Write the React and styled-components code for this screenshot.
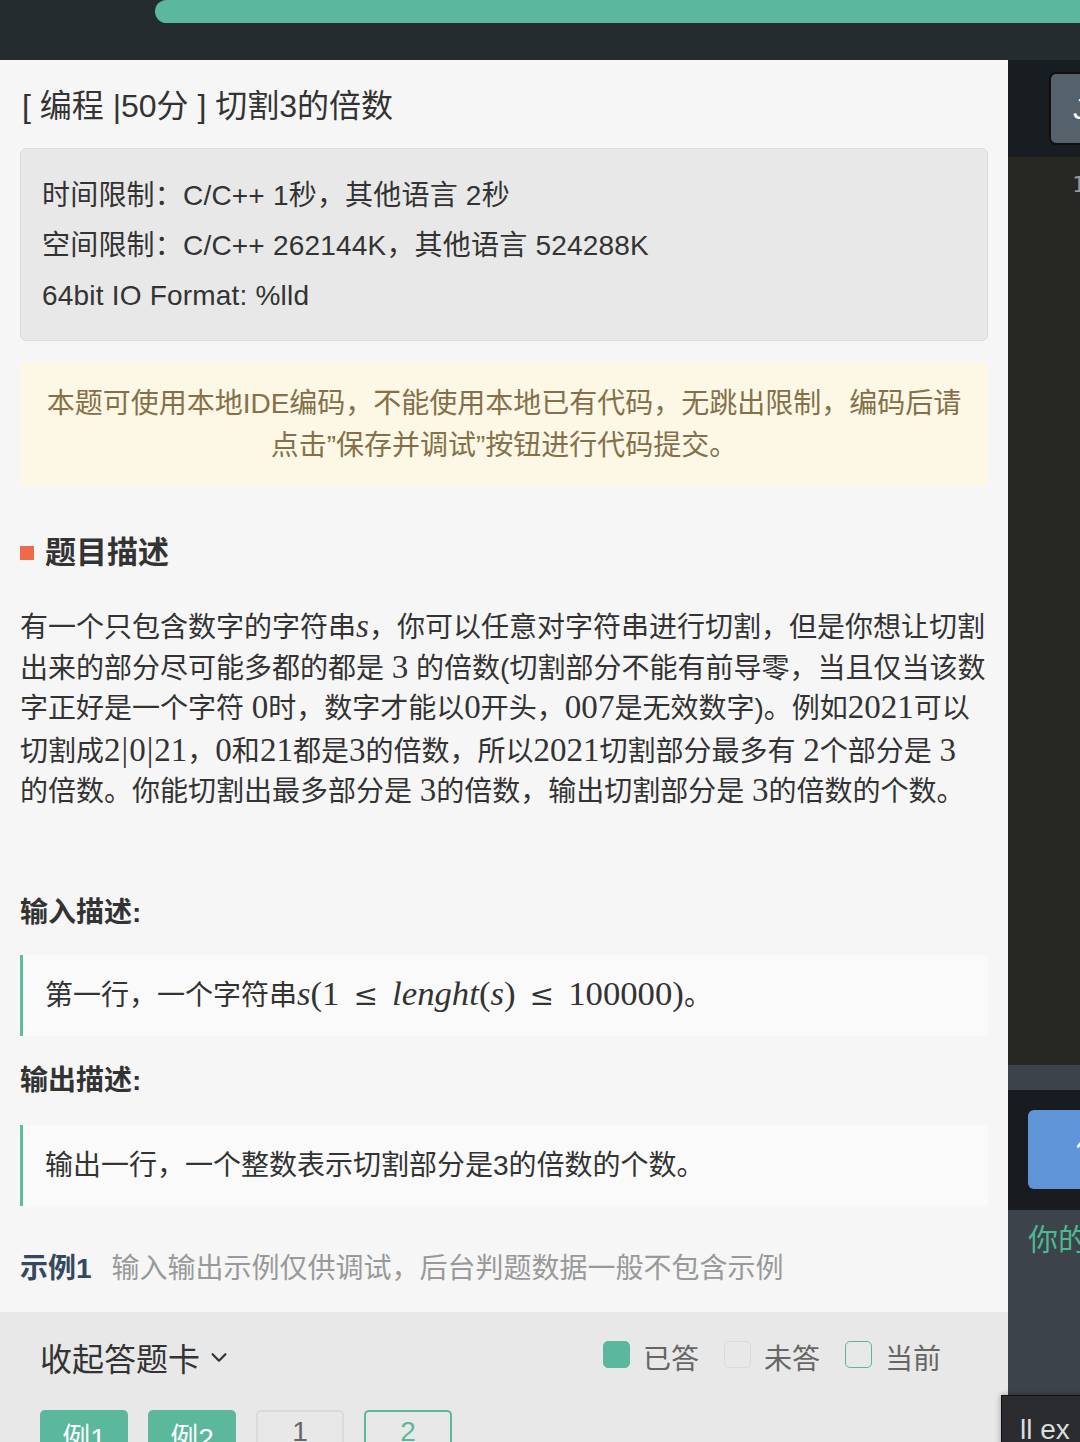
import React from 'react';
import styled, { createGlobalStyle } from 'styled-components';

const GlobalStyle = createGlobalStyle`
  html, body {
    margin: 0;
    padding: 0;
    background: #252c30;
  }
  body {
    font-family: "Liberation Sans", "Noto Sans CJK SC", sans-serif;
  }
  * {
    box-sizing: border-box;
  }
`;

const Page = styled.div`
  width: 1080px;
  height: 1442px;
  display: flex;
  flex-direction: column;
  overflow: hidden;
`;

const TopBar = styled.div`
  height: 60px;
  flex-shrink: 0;
  background-color: #252c30;
  padding-left: 155px;
`;

const Progress = styled.div`
  height: 23px;
  background-color: #5bb89c;
  border-radius: 12px 0 0 12px;
`;

const Main = styled.div`
  position: relative;
  flex: 1;
  display: flex;
  flex-direction: row;
  min-height: 0;
`;

const LeftPanel = styled.div`
  width: 1008px;
  flex-shrink: 0;
  display: flex;
  flex-direction: column;
  background-color: #f6f6f6;
`;

const Content = styled.div`
  flex: 1;
  overflow: hidden;
  padding: 0 20px;
  color: #333;
`;

const Title = styled.h1`
  margin: 24px 0 0 2px;
  font-size: 32px;
  font-weight: 400;
  line-height: 44px;
  color: #333;
`;

const InfoBox = styled.div`
  margin-top: 20px;
  padding: 22px 21px 19px;
  background-color: #e8e8e8;
  border: 1px solid #dcdcdc;
  border-radius: 6px;
`;

const InfoLine = styled.div`
  font-size: 28px;
  line-height: 50px;
  letter-spacing: 0.2px;
  white-space: nowrap;
`;

const Notice = styled.div`
  margin-top: 21px;
  padding: 21px 20px 19px;
  background-color: #fcf8e5;
  color: #85704a;
  font-size: 28px;
  line-height: 42px;
  text-align: center;
`;

const SectionHeading = styled.h2`
  display: flex;
  align-items: center;
  gap: 11px;
  margin: 45px 0 0;
  font-size: 31px;
  font-weight: 700;
  line-height: 44px;
  color: #333;

  &::before {
    content: '';
    width: 14px;
    height: 14px;
    background-color: #ee6a4a;
  }
`;

const Paragraph = styled.div`
  margin-top: 33px;
  font-size: 28px;
  line-height: 40.5px;
  color: #333;
`;

const Line = styled.div`
  white-space: nowrap;
`;

const Math = styled.span`
  font-family: "Liberation Serif", "DejaVu Serif", serif;
  font-size: ${(p) => (p.$big ? '1.24em' : '1.18em')};
  font-style: ${(p) => (p.$italic ? 'italic' : 'normal')};
  line-height: 1;
`;

const Rel = styled.span`
  font-family: "DejaVu Serif", "Liberation Serif", serif;
  font-size: 1.05em;
  margin: 0 14px;
  line-height: 1;
`;

const Bar = styled.span`
  font-family: "Liberation Serif", serif;
  font-size: 1.18em;
  margin: 0 1px;
`;

const SubHeading = styled.h3`
  margin: ${(p) => p.$top}px 0 0;
  font-size: 28px;
  font-weight: 700;
  line-height: 40px;
  color: #333;
`;

const Quote = styled.div`
  margin-top: ${(p) => p.$top}px;
  padding: 20px 22px;
  background-color: #fafafa;
  border-left: 3px solid #5bbd9c;
  font-size: 28px;
  line-height: 41px;
  white-space: nowrap;
`;

const Example = styled.div`
  margin-top: 43px;
  display: flex;
  align-items: center;
  gap: 20px;
  font-size: 28px;
  line-height: 40px;
`;

const ExampleTitle = styled.span`
  font-weight: 700;
  color: #34495e;
`;

const ExampleHint = styled.span`
  color: #999;
`;

const AnswerCard = styled.div`
  height: 130px;
  flex-shrink: 0;
  background-color: #e8e8e8;
  padding: 20px 67px 0 40px;
  overflow: hidden;
`;

const CardHeader = styled.div`
  display: flex;
  justify-content: space-between;
  align-items: center;
  height: 50px;
`;

const Collapse = styled.div`
  display: flex;
  align-items: center;
  gap: 8px;
  font-size: 32px;
  color: #333;
`;

const Legend = styled.div`
  display: flex;
  align-items: center;
  font-size: 28px;
  color: #666;
`;

const LegendItem = styled.div`
  display: flex;
  align-items: center;
  gap: 13px;
  margin-left: ${(p) => (p.$first ? 0 : 25)}px;
`;

const Swatch = styled.span`
  width: 27px;
  height: 27px;
  border-radius: 5px;
  background-color: ${(p) => (p.$kind === 'done' ? '#5bb89c' : '#e8e8e8')};
  border: 1.5px solid ${(p) => (p.$kind === 'todo' ? '#dadada' : '#5bb89c')};
  margin-top: -6px;
`;

const Buttons = styled.div`
  display: flex;
  gap: 20px;
  margin-top: 28px;
`;

const QButton = styled.div`
  width: 88px;
  height: 48px;
  border-radius: 5px;
  display: flex;
  justify-content: center;
  padding-top: 4px;
  font-size: 28px;
  background-color: ${(p) => (p.$kind === 'done' ? '#5bb89c' : '#e8e8e8')};
  color: ${(p) => (p.$kind === 'done' ? '#fff' : p.$kind === 'current' ? '#5bb89c' : '#666')};
  border: 2px solid ${(p) => (p.$kind === 'todo' ? '#dadada' : '#5bb89c')};
`;

const RightPanel = styled.div`
  flex: 1;
  display: flex;
  flex-direction: column;
  overflow: hidden;
`;

const EditorHeader = styled.div`
  height: 97px;
  background-color: #181d21;
  padding: 12px 0 0 41px;
`;

const LangButton = styled.div`
  width: 80px;
  height: 73px;
  background-color: #56626b;
  border: 2px solid #0d0f11;
  border-radius: 7px;
  color: #fff;
  font-size: 30px;
  line-height: 69px;
  padding-left: 22px;
`;

const Editor = styled.div`
  height: 908px;
  background-color: #282823;
  padding: 10px 0 0 64px;
  color: #999;
  font-family: "DejaVu Sans Mono", monospace;
  font-size: 22px;
  line-height: 36px;
`;

const Strip = styled.div`
  height: 25px;
  background-color: #3c434a;
`;

const ActionBar = styled.div`
  height: 120px;
  background-color: #181c20;
  padding: 20px 0 0 20px;
`;

const RunButton = styled.div`
  width: 120px;
  height: 79px;
  background-color: #6094d8;
  border-radius: 6px;
  color: #fff;
  font-size: 28px;
  line-height: 79px;
  padding-left: 48px;
`;

const Result = styled.div`
  flex: 1;
  background-color: #3c434a;
  padding: 10px 0 0 20px;
  color: #4db891;
  font-size: 30px;
  line-height: 40px;
  white-space: nowrap;
`;

const Console = styled.div`
  position: absolute;
  left: 1001px;
  top: 1335px;
  width: 120px;
  height: 80px;
  background-color: #2b2c2f;
  border: 1px solid #111;
  box-shadow: 0 0 6px rgba(0, 0, 0, 0.35);
  color: #ddd;
  font-size: 28px;
  padding: 18px 0 0 18px;
  white-space: nowrap;
`;

const Chevron = () => (
  <svg width="22" height="22" viewBox="0 0 24 24" fill="none" stroke="#333" strokeWidth="2.4" strokeLinecap="round" strokeLinejoin="round">
    <path d="M5 9l7 7 7-7" />
  </svg>
);

export default function App() {
  return (
    <>
      <GlobalStyle />
      <Page>
        <TopBar>
          <Progress />
        </TopBar>
        <Main>
          <LeftPanel>
            <Content>
              <Title>[ 编程 |50分 ] 切割3的倍数</Title>
              <InfoBox>
                <InfoLine>时间限制：C/C++ 1秒，其他语言 2秒</InfoLine>
                <InfoLine>空间限制：C/C++ 262144K，其他语言 524288K</InfoLine>
                <InfoLine>64bit IO Format: %lld</InfoLine>
              </InfoBox>
              <Notice>
                本题可使用本地IDE编码，不能使用本地已有代码，无跳出限制，编码后请
                <br />
                点击”保存并调试”按钮进行代码提交。
              </Notice>
              <SectionHeading>题目描述</SectionHeading>
              <Paragraph>
                <Line>
                  有一个只包含数字的字符串<Math $italic>s</Math>，你可以任意对字符串进行切割，但是你想让切割
                </Line>
                <Line>
                  出来的部分尽可能多都的都是 <Math>3</Math> 的倍数(切割部分不能有前导零，当且仅当该数
                </Line>
                <Line>
                  字正好是一个字符 <Math>0</Math>时，数字才能以<Math>0</Math>开头，<Math>007</Math>是无效数字)。例如<Math>2021</Math>可以
                </Line>
                <Line>
                  切割成<Math>2</Math><Bar>|</Bar><Math>0</Math><Bar>|</Bar><Math>21</Math>，<Math>0</Math>和<Math>21</Math>都是<Math>3</Math>的倍数，所以<Math>2021</Math>切割部分最多有 <Math>2</Math>个部分是 <Math>3</Math>
                </Line>
                <Line>
                  的倍数。你能切割出最多部分是 <Math>3</Math>的倍数，输出切割部分是 <Math>3</Math>的倍数的个数。
                </Line>
              </Paragraph>
              <SubHeading $top={80}>输入描述:</SubHeading>
              <Quote $top={22}>
                第一行，一个字符串<Math $big $italic>s</Math>
                <Math $big>(1</Math>
                <Rel>≤</Rel>
                <Math $big $italic>lenght</Math>
                <Math $big>(</Math>
                <Math $big $italic>s</Math>
                <Math $big>)</Math>
                <Rel>≤</Rel>
                <Math $big>100000)</Math>。
              </Quote>
              <SubHeading $top={25}>输出描述:</SubHeading>
              <Quote $top={24}>输出一行，一个整数表示切割部分是3的倍数的个数。</Quote>
              <Example>
                <ExampleTitle>示例1</ExampleTitle>
                <ExampleHint>输入输出示例仅供调试，后台判题数据一般不包含示例</ExampleHint>
              </Example>
            </Content>
            <AnswerCard>
              <CardHeader>
                <Collapse>
                  收起答题卡
                  <Chevron />
                </Collapse>
                <Legend>
                  <LegendItem $first>
                    <Swatch $kind="done" />
                    已答
                  </LegendItem>
                  <LegendItem>
                    <Swatch $kind="todo" />
                    未答
                  </LegendItem>
                  <LegendItem>
                    <Swatch $kind="current" />
                    当前
                  </LegendItem>
                </Legend>
              </CardHeader>
              <Buttons>
                <QButton $kind="done">例1</QButton>
                <QButton $kind="done">例2</QButton>
                <QButton $kind="todo">1</QButton>
                <QButton $kind="current">2</QButton>
              </Buttons>
            </AnswerCard>
          </LeftPanel>
          <RightPanel>
            <EditorHeader>
              <LangButton>J</LangButton>
            </EditorHeader>
            <Editor>1</Editor>
            <Strip />
            <ActionBar>
              <RunButton>保</RunButton>
            </ActionBar>
            <Result>你的代码</Result>
          </RightPanel>
          <Console>ll ex</Console>
        </Main>
      </Page>
    </>
  );
}
